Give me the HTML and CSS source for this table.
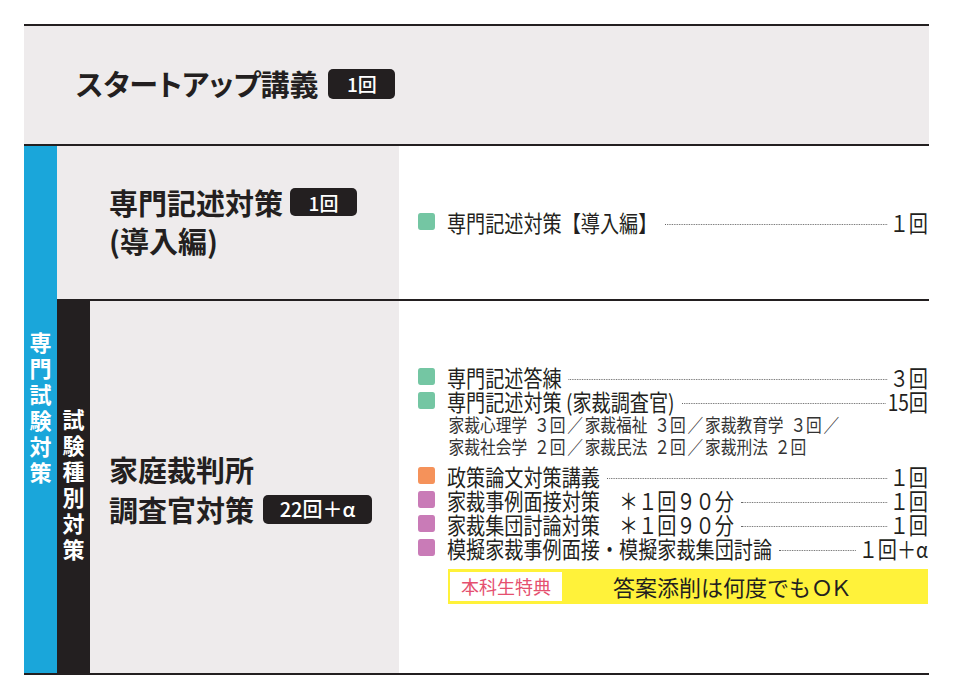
FILE: index.html
```html
<!DOCTYPE html>
<html lang="ja">
<head>
<meta charset="utf-8">
<title>カリキュラム</title>
<link rel="stylesheet" href="styles.css">
</head>
<body>
<div class="chart">
  <section class="row-top">
    <h2 class="title">スタートアップ講義<span class="badge badge-top">1回</span></h2>
  </section>
  <section class="grid">
    <div class="col-blue"><span class="vtext">専門試験対策</span></div>

    <div class="head head-a">
      <h3 class="title2 title2-a">
        <span class="tline">専門記述対策<span class="badge badge-a">1回</span></span>
        <span class="tline">(導入編)</span>
      </h3>
    </div>
    <div class="detail detail-a">
      <div class="items">
        <div class="item"><span class="mark green"></span><span class="label">専門記述対策【導入編】</span><span class="leader"></span><span class="count">１回</span></div>
      </div>
    </div>

    <div class="col-black"><span class="vtext">試験種別対策</span></div>
    <div class="head head-b">
      <h3 class="title2 title2-b">
        <span class="tline">家庭裁判所</span>
        <span class="tline">調査官対策<span class="badge badge-b">22回＋α</span></span>
      </h3>
    </div>
    <div class="detail detail-b">
      <div class="items">
        <div class="item"><span class="mark green"></span><span class="label">専門記述答練</span><span class="leader"></span><span class="count">３回</span></div>
        <div class="item"><span class="mark green"></span><span class="label">専門記述対策 (家裁調査官)</span><span class="leader"></span><span class="count">15回</span></div>
        <p class="note">家裁心理学<span class="n">３回</span><span class="sl">／</span>家裁福祉<span class="n">３回</span><span class="sl">／</span>家裁教育学<span class="n">３回</span><span class="sl">／</span><br>家裁社会学<span class="n">２回</span><span class="sl">／</span>家裁民法<span class="n">２回</span><span class="sl">／</span>家裁刑法<span class="n">２回</span></p>
        <div class="item item-gap"><span class="mark orange"></span><span class="label">政策論文対策講義</span><span class="leader"></span><span class="count">１回</span></div>
        <div class="item"><span class="mark purple"></span><span class="label">家裁事例面接対策　＊１回９０分</span><span class="leader"></span><span class="count">１回</span></div>
        <div class="item"><span class="mark purple"></span><span class="label">家裁集団討論対策　＊１回９０分</span><span class="leader"></span><span class="count">１回</span></div>
        <div class="item"><span class="mark purple"></span><span class="label">模擬家裁事例面接・模擬家裁集団討論</span><span class="leader"></span><span class="count">１回＋α</span></div>
      </div>
      <div class="banner">
        <span class="tag">本科生特典</span>
        <span class="banner-text">答案添削は何度でも<span class="ok">ＯＫ</span></span>
      </div>
    </div>
  </section>
</div>
</body>
</html>
```

FILE: styles.css
```css
* {
  box-sizing: border-box;
  margin: 0;
  padding: 0;
}

body {
  margin: 0;
  background: #ffffff;
  font-family: "Noto Sans CJK JP", "Noto Sans", sans-serif;
  color: #231f20;
  overflow: hidden;
}

.chart {
  width: 905px;
  margin: 24px 0 0 24px;
  border-bottom: 2px solid #231f20;
}

.row-top {
  height: 122px;
  border-top: 2px solid #231f20;
  border-bottom: 2px solid #231f20;
  background: #eeebec;
  display: flex;
  align-items: center;
  padding-left: 52px;
  padding-bottom: 3px;
}

.title {
  display: flex;
  align-items: center;
  font-size: 29px;
  font-weight: 700;
  line-height: 1;
  font-feature-settings: "palt";
}

.badge {
  display: inline-flex;
  align-items: center;
  justify-content: center;
  background: #231f20;
  color: #ffffff;
  border-radius: 5px;
  font-weight: 500;
  line-height: 1;
  letter-spacing: 0;
  font-feature-settings: normal;
}

.badge-top {
  width: 67px;
  height: 30px;
  margin-left: 10px;
  font-size: 19px;
}

.badge-a {
  width: 67px;
  height: 28px;
  margin-left: 7px;
  font-size: 19px;
}

.badge-b {
  width: 109px;
  height: 29px;
  margin-left: 9px;
  font-size: 20px;
}

.grid {
  display: grid;
  grid-template-columns: 33px 33px 309px 530px;
  grid-template-rows: 153px 374px;
}

.col-blue {
  grid-column: 1;
  grid-row: 1 / 3;
  background: #1aa6da;
  display: flex;
  align-items: center;
  justify-content: center;
}

.col-black {
  grid-column: 2;
  grid-row: 2;
  background: #231f20;
  border-top: 2px solid #231f20;
  display: flex;
  align-items: center;
  justify-content: center;
}

.vtext {
  writing-mode: vertical-rl;
  text-orientation: upright;
  color: #ffffff;
  font-size: 22px;
  font-weight: 700;
  line-height: 1;
  letter-spacing: 4px;
}

.head {
  background: #eeebec;
  display: flex;
  align-items: center;
}

.head-a {
  grid-column: 2 / 4;
  grid-row: 1;
  padding-left: 52px;
  padding-bottom: 3px;
}

.head-b {
  grid-column: 3;
  grid-row: 2;
  border-top: 2px solid #231f20;
  padding-left: 19px;
  padding-top: 4px;
}

.title2 {
  font-size: 29px;
  font-weight: 700;
  font-feature-settings: "palt";
  display: flex;
  flex-direction: column;
}

.title2-a .tline {
  height: 38px;
  display: flex;
  align-items: center;
}

.title2-b .tline {
  height: 40px;
  display: flex;
  align-items: center;
}

.detail {
  display: flex;
  flex-direction: column;
  justify-content: center;
  align-items: flex-start;
  padding-left: 19px;
  overflow: hidden;
}

.detail-a {
  grid-column: 4;
  grid-row: 1;
  padding-bottom: 2px;
}

.detail-b {
  grid-column: 4;
  grid-row: 2;
  border-top: 2px solid #231f20;
  padding-bottom: 6px;
}

.items {
  width: 600px;
  flex: none;
  transform: scaleX(0.85);
  transform-origin: left center;
  font-size: 22.5px;
}

.item {
  display: flex;
  align-items: center;
  height: 24px;
  line-height: 24px;
  white-space: nowrap;
}

.item-gap {
  margin-top: 7px;
}

.mark {
  flex: none;
  width: 20px;
  height: 17px;
  border-radius: 3px;
  margin-right: 14px;
}

.green { background: #74c6a3; }
.orange { background: #f5925a; }
.purple { background: #c97bb7; }

.leader {
  flex: 1;
  height: 0;
  border-bottom: 1px dotted #666666;
  margin: 5px 3px 0 8px;
}

.count {
  flex: none;
}

.note {
  padding-left: 36px;
  font-size: 18.5px;
  line-height: 22px;
  color: #333333;
  white-space: nowrap;
}

.note .n {
  margin-left: 8px;
}

.note .sl {
  margin: 0 2px;
}

.banner {
  margin-top: 9px;
  margin-left: 30px;
  width: 480px;
  height: 35px;
  background: #fff23a;
  display: flex;
  align-items: center;
  padding-left: 2px;
}

.tag {
  width: 112px;
  height: 29px;
  background: #ffffff;
  color: #e5506f;
  font-size: 18px;
  font-weight: 400;
  display: flex;
  align-items: center;
  justify-content: center;
}

.banner-text {
  margin-left: 51px;
  font-size: 22px;
  font-weight: 400;
  line-height: 1;
}

.ok {
  letter-spacing: -3px;
}
```
